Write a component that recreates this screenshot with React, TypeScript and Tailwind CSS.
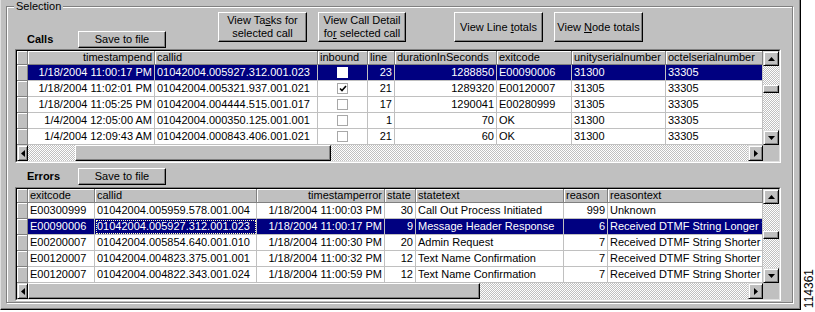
import type { ReactNode } from "react";

type Col = {
  label: string;
  w: string;
  head: "left" | "right";
  align: "left" | "right" | "center";
};

const raised =
  "bg-[#c0c0c0] border border-t-white border-l-white border-r-black border-b-black shadow-[inset_-1px_-1px_0_#808080]";
const scrollBtn =
  "bg-[#c0c0c0] border border-t-[#dfdfdf] border-l-[#dfdfdf] border-r-black border-b-black shadow-[inset_1px_1px_0_#fff,inset_-1px_-1px_0_#808080] flex items-center justify-center";
const dither =
  "bg-[image:repeating-conic-gradient(#ffffff_0%_25%,#c0c0c0_0%_50%)] bg-[length:2px_2px]";

function Arrow({ dir }: { dir: "up" | "down" | "left" | "right" }) {
  if (dir === "up")
    return (
      <svg width="7" height="4" viewBox="0 0 7 4">
        <path d="M3.5 0L7 4H0z" fill="#000" />
      </svg>
    );
  if (dir === "down")
    return (
      <svg width="7" height="4" viewBox="0 0 7 4">
        <path d="M0 0H7L3.5 4z" fill="#000" />
      </svg>
    );
  if (dir === "left")
    return (
      <svg width="4" height="7" viewBox="0 0 4 7">
        <path d="M0 3.5L4 0V7z" fill="#000" />
      </svg>
    );
  return (
    <svg width="4" height="7" viewBox="0 0 4 7">
      <path d="M4 3.5L0 0V7z" fill="#000" />
    </svg>
  );
}

function Button({ className, children }: { className: string; children: ReactNode }) {
  return (
    <div className={`${raised} ${className} flex flex-col items-center justify-center leading-[13px] text-center`}>
      {children}
    </div>
  );
}

function CheckBox({ checked, selected }: { checked: boolean; selected: boolean }) {
  return (
    <span
      className={
        selected
          ? "w-[11px] h-[11px] bg-white flex items-center justify-center"
          : "w-[11px] h-[11px] bg-white border border-[#a8a8a8] flex items-center justify-center"
      }
    >
      {checked && (
        <svg width="8" height="7" viewBox="0 0 8 7">
          <path d="M1 3.5L3 5.5L7 1" stroke="#000" strokeWidth="1.6" fill="none" />
        </svg>
      )}
    </span>
  );
}

function Grid({
  cols,
  rows,
  selected,
  focusCol,
  hLeft,
  hThumb,
  vThumb,
}: {
  cols: Col[];
  rows: ReactNode[][];
  selected: number;
  focusCol?: number;
  hLeft: string;
  hThumb: string;
  vThumb: string;
}) {
  return (
    <div className="w-[766px] border border-t-[#808080] border-l-[#808080] border-r-white border-b-white">
      <div className="flex flex-col border border-t-black border-l-black border-r-[#dfdfdf] border-b-[#dfdfdf] bg-[#c0c0c0]">
        <div className="flex">
          <div className="w-[746px] flex flex-col bg-white">
            <div className="flex h-[14px]">
              <div className="w-[11px] bg-[#c0c0c0] border-r border-b border-[#808080] shadow-[inset_1px_1px_0_#fff]" />
              {cols.map((c) => (
                <div
                  key={c.label}
                  className={`${c.w} bg-[#c0c0c0] border-r border-b border-[#808080] shadow-[inset_1px_1px_0_#fff] px-[2px] leading-[13px] whitespace-nowrap overflow-hidden ${
                    c.head === "right" ? "text-right" : "text-left"
                  }`}
                >
                  {c.label}
                </div>
              ))}
            </div>
            {rows.map((r, i) => {
              const sel = i === selected;
              return (
                <div key={i} className={sel ? "flex h-[16px] bg-[#000080] text-white" : "flex h-[16px]"}>
                  <div className="w-[11px] bg-[#c0c0c0] border-r border-b border-[#808080] shadow-[inset_1px_1px_0_#fff]" />
                  {r.map((cell, j) => {
                    const c = cols[j];
                    const al =
                      c.align === "right"
                        ? "justify-end"
                        : c.align === "center"
                        ? "justify-center"
                        : "justify-start";
                    const focus =
                      sel && focusCol === j
                        ? " outline-1 outline-dotted outline-[#ffffc0] -outline-offset-2"
                        : "";
                    return (
                      <div
                        key={j}
                        className={`${c.w} flex items-center ${al} border-r border-b border-[#c0c0c0] px-[2px] leading-[15px] whitespace-nowrap overflow-hidden${focus}`}
                      >
                        {cell}
                      </div>
                    );
                  })}
                </div>
              );
            })}
          </div>
          <div className="w-[16px] h-[94px] flex flex-col">
            <div className={`${scrollBtn} h-[15px]`}>
              <Arrow dir="up" />
            </div>
            <div className={`flex-1 ${dither}`}>
              <div className={`${raised} ${vThumb} h-[8px]`} />
            </div>
            <div className={`${scrollBtn} h-[15px]`}>
              <Arrow dir="down" />
            </div>
          </div>
        </div>
        <div className="flex h-[16px]">
          <div className={`${scrollBtn} w-[11px]`}>
            <Arrow dir="left" />
          </div>
          <div className={`${hLeft} ${dither}`} />
          <div className={`${raised} ${hThumb}`} />
          <div className={`flex-1 ${dither}`} />
          <div className={`${scrollBtn} w-[15px]`}>
            <Arrow dir="right" />
          </div>
          <div className="w-[16px] bg-[#c0c0c0]" />
        </div>
      </div>
    </div>
  );
}

const callCols: Col[] = [
  { label: "timestampend", w: "w-[127px]", head: "right", align: "right" },
  { label: "callid", w: "w-[163px]", head: "left", align: "left" },
  { label: "inbound", w: "w-[50px]", head: "left", align: "center" },
  { label: "line", w: "w-[27px]", head: "left", align: "right" },
  { label: "durationInSeconds", w: "w-[102px]", head: "left", align: "right" },
  { label: "exitcode", w: "w-[75px]", head: "left", align: "left" },
  { label: "unityserialnumber", w: "w-[94px]", head: "left", align: "left" },
  { label: "octelserialnumber", w: "w-[97px]", head: "left", align: "left" },
];

const errorCols: Col[] = [
  { label: "exitcode", w: "w-[67px]", head: "left", align: "left" },
  { label: "callid", w: "w-[162px]", head: "left", align: "left" },
  { label: "timestamperror", w: "w-[128px]", head: "right", align: "right" },
  { label: "state", w: "w-[31px]", head: "left", align: "right" },
  { label: "statetext", w: "w-[148px]", head: "left", align: "left" },
  { label: "reason", w: "w-[44px]", head: "left", align: "right" },
  { label: "reasontext", w: "w-[155px]", head: "left", align: "left" },
];

const calls = [
  ["1/18/2004 11:00:17 PM", "01042004.005927.312.001.023", false, "23", "1288850", "E00090006", "31300", "33305"],
  ["1/18/2004 11:02:01 PM", "01042004.005321.937.001.021", true, "21", "1289320", "E00120007", "31305", "33305"],
  ["1/18/2004 11:05:25 PM", "01042004.004444.515.001.017", false, "17", "1290041", "E00280999", "31305", "33305"],
  ["1/4/2004 12:05:00 AM", "01042004.000350.125.001.001", false, "1", "70", "OK", "31300", "33305"],
  ["1/4/2004 12:09:43 AM", "01042004.000843.406.001.021", false, "21", "60", "OK", "31300", "33305"],
] as const;

const errors = [
  ["E00300999", "01042004.005959.578.001.004", "1/18/2004 11:00:03 PM", "30", "Call Out Process Initiated", "999", "Unknown"],
  ["E00090006", "01042004.005927.312.001.023", "1/18/2004 11:00:17 PM", "9", "Message Header Response", "6", "Received DTMF String Longer Than Expected"],
  ["E00200007", "01042004.005854.640.001.010", "1/18/2004 11:00:30 PM", "20", "Admin Request", "7", "Received DTMF String Shorter Than Expected"],
  ["E00120007", "01042004.004823.375.001.001", "1/18/2004 11:00:32 PM", "12", "Text Name Confirmation", "7", "Received DTMF String Shorter Than Expected"],
  ["E00120007", "01042004.004822.343.001.024", "1/18/2004 11:00:59 PM", "12", "Text Name Confirmation", "7", "Received DTMF String Shorter Than Expected"],
];

export default function App() {
  const callRows: ReactNode[][] = calls.map((r, i) =>
    r.map((v, j) => (j === 2 ? <CheckBox checked={v as boolean} selected={i === 0} /> : (v as string)))
  );

  return (
    <div className="flex w-[815px] h-[312px] bg-white text-[11px] text-black font-['Liberation_Sans',Arial,sans-serif]">
      <div className="w-[801px] h-[310px] bg-[#c0c0c0] border-l border-l-[#dfdfdf] border-r border-r-black border-b border-b-black shadow-[inset_-1px_-1px_0_#808080] pl-[5px] pr-[7px] pt-[6px]">
        <div className="h-[297px] flex flex-col pl-[8px] border border-[#808080] shadow-[inset_1px_1px_0_#fff,1px_1px_0_#fff]">
          <div className="flex h-[42px]">
            <div className="w-[203px] flex flex-col">
              <div className="-mt-[7px] -ml-[1px] h-[13px] leading-[13px] self-start bg-[#c0c0c0] pl-[2px] pr-[2px]">
                Selection
              </div>
              <div className="mt-auto mb-[1px] flex items-center">
                <span className="w-[63px] pl-[12px] font-bold">Calls</span>
                <Button className="w-[88px] h-[17px]">Save to file</Button>
              </div>
            </div>
            <div className="flex items-start pt-[5px]">
              <Button className="w-[89px] h-[30px]">
                <span>
                  View Ta<u>s</u>ks for
                </span>
                <span>selected call</span>
              </Button>
              <Button className="ml-[11px] w-[88px] h-[30px]">
                <span>View Call Detail</span>
                <span>
                  fo<u>r</u> selected call
                </span>
              </Button>
              <Button className="ml-[48px] w-[89px] h-[30px]">
                <span>
                  View Line <u>t</u>otals
                </span>
              </Button>
              <Button className="ml-[11px] w-[89px] h-[30px]">
                <span>
                  View <u>N</u>ode totals
                </span>
              </Button>
            </div>
          </div>

          <Grid
            cols={callCols}
            rows={callRows}
            selected={0}
            hLeft="w-[47px]"
            hThumb="w-[256px]"
            vThumb="mt-[19px]"
          />

          <div className="mt-[5px] h-[17px] flex items-center">
            <span className="w-[63px] pl-[12px] font-bold">Errors</span>
            <Button className="w-[88px] h-[17px]">Save to file</Button>
          </div>

          <div className="mt-[2px]">
            <Grid
              cols={errorCols}
              rows={errors}
              selected={1}
              focusCol={1}
              hLeft="w-0"
              hThumb="w-[452px]"
              vThumb="mt-[27px]"
            />
          </div>
        </div>
      </div>
      <div className="flex-1 flex flex-col items-center justify-end pb-[4px] pl-[1px]">
        <div className="[writing-mode:vertical-rl] rotate-180 text-[12px] leading-[12px]">114361</div>
      </div>
    </div>
  );
}
